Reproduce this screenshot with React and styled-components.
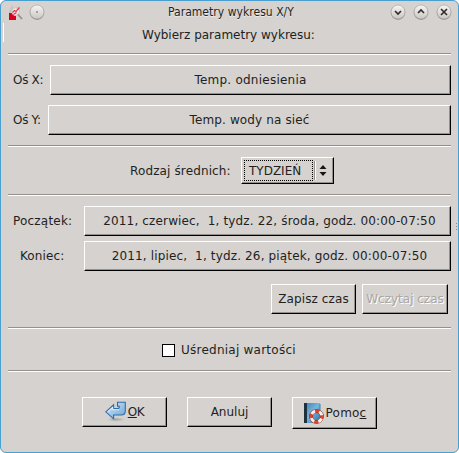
import React from "react";
import styled, { createGlobalStyle, css } from "styled-components";

const GlobalStyle = createGlobalStyle`
  * { box-sizing: border-box; }
  body { margin: 0; background: #fff; overflow: hidden; }
`;

const Window = styled.main`
  position: relative;
  width: 459px;
  height: 453px;
  border: 1px solid #489fd0;
  border-radius: 6px;
  background: #d6d2cf;
  color: #221f1e;
  font: 12px/16px "DejaVu Sans", sans-serif;
  display: flex;
  flex-direction: column;
  white-space: pre;
`;

const TitleBar = styled.header`
  height: 22px;
  display: grid;
  grid-template-columns: 50px 1fr 68px;
  align-items: center;
  padding: 0 0 0 5px;
`;

const TitleIcons = styled.div`
  display: flex;
  align-items: center;
  gap: 6px;
`;

const TitleButtons = styled.div`
  display: flex;
  gap: 7px;
`;

const Title = styled.h1`
  margin: 0;
  padding-left: 112px;
  font: 12px/18px "DejaVu Sans Condensed", "DejaVu Sans", sans-serif;
  font-stretch: condensed;
  letter-spacing: 0.04px;
  text-shadow: 0 1px 0 #eeecea;
`;

const Label = styled.span`
  letter-spacing: ${(p) => p.$spacing || 0}px;
  ${(p) => p.$disabled && css`
    color: #aaa6a2;
    text-shadow: 1px 1px 0 #fff;
  `}
`;

const Heading = styled.div`
  height: 30px;
  padding: 4px 0 0 141px;
`;

const Separator = styled.hr`
  flex: none;
  width: 443px;
  height: 2px;
  margin: 0 0 0 7px;
  border: 0;
  border-top: 1px solid #94908c;
  border-bottom: 1px solid #fff;
`;

const Section = styled.section`
  height: ${(p) => p.$height}px;
  padding-top: ${(p) => p.$top}px;
  display: flex;
  flex-direction: column;
  gap: ${(p) => p.$gap || 0}px;
`;

const Row = styled.div`
  display: flex;
  align-items: ${(p) => p.$align || "center"};
  padding: ${(p) => p.$top || 0}px 7px 0 ${(p) => p.$left}px;
`;

const FieldLabel = styled.label`
  flex: none;
  width: ${(p) => p.$width}px;
  padding-left: ${(p) => p.$indent || 0}px;
  letter-spacing: ${(p) => p.$spacing || 0}px;
`;

const Button = styled.button`
  flex: none;
  width: ${(p) => p.$width}px;
  height: ${(p) => p.$height || 30}px;
  margin: 0 ${(p) => p.$after || 0}px 0 0;
  padding: 0 0 1px;
  display: flex;
  align-items: center;
  justify-content: center;
  gap: 2px;
  border: 1px solid;
  border-color: #fff #000 #000 #fff;
  border-radius: 0;
  box-shadow: inset -1px -1px #94908c;
  background: #d6d2cf;
  color: inherit;
  font: inherit;
  white-space: pre;
`;

const Combo = styled(Button)`
  justify-content: flex-start;
  padding: 0 0 0 2px;
  gap: 1px;
  text-align: left;
`;

const ComboValue = styled.span`
  width: 69px;
  height: 21px;
  padding: 2px 0 0 4px;
  border: 1px dotted #000;
`;

const ComboDivider = styled.i`
  width: 2px;
  height: 19px;
  margin-right: 2px;
  border-left: 1px solid #94908c;
  border-right: 1px solid #fff;
`;

const CheckRow = styled.label`
  display: flex;
  align-items: center;
  padding-left: 161px;
  gap: 6px;
`;

const CheckBox = styled.input`
  appearance: none;
  width: 13px;
  height: 13px;
  margin: 0;
  border: 1px solid #000;
  background: #fff;
`;

const Highlight = styled.i`
  position: absolute;
  left: 2px;
  top: 22px;
  width: 1px;
  height: 19px;
  background: #fff;
`;

const Grip = styled.svg`
  position: absolute;
  right: 0;
  top: 222px;
`;

function RoundIcon({ kind }) {
  const paths = {
    down: "M5 7l3 3 3-3",
    up: "M5 9l3-3 3 3",
    close: "M5 5l6 6M11 5l-6 6",
  };
  return (
    <svg width="16" height="17" viewBox="0 0 16 17">
      <defs>
        <linearGradient id={`disc-${kind}`} x2="0" y2="1">
          <stop stopColor="#f8f7f6" />
          <stop offset="1" stopColor="#c9c5c2" />
        </linearGradient>
      </defs>
      <circle cx="8" cy="8.6" r="7.2" fill="#8e8a88" />
      <circle cx="8" cy="8" r="7" fill={`url(#disc-${kind})`} stroke="#a19d9a" strokeWidth=".6" />
      {kind === "dot" ? (
        <circle cx="8" cy="8" r=".8" fill="#555" />
      ) : (
        <path d={paths[kind]} fill="none" stroke="#302d2b" strokeWidth="1.7" />
      )}
    </svg>
  );
}

function AppIcon() {
  return (
    <svg width="17" height="17" viewBox="0 0 17 17">
      <path d="M3 7l3-6 2 4 5-3-2 9-8 1z" fill="#c7c4c3" />
      <path d="M3 9h4l1 3h2v4H3z" fill="#d9001f" />
      <circle cx="9.5" cy="7.5" r="3.8" fill="#eeeaea" stroke="#c5c1c0" strokeWidth=".8" />
      <path d="M6.5 8.5l2-2 1.5 1 3.5-4M7.5 10.5l3-2" stroke="#e43a50" strokeWidth="1.3" fill="none" />
      <path d="M12 10.5l4 4.5" stroke="#96918f" strokeWidth="1.8" />
    </svg>
  );
}

function ReturnIcon() {
  return (
    <svg width="21" height="21" viewBox="0 0 21 21">
      <defs>
        <linearGradient id="arrow" x2="1" y2="1">
          <stop stopColor="#dcecf8" />
          <stop offset=".5" stopColor="#9fc7e8" />
          <stop offset="1" stopColor="#69a3d2" />
        </linearGradient>
        <radialGradient id="arrowShade">
          <stop stopColor="#77736f" stopOpacity=".5" />
          <stop offset="1" stopColor="#77736f" stopOpacity="0" />
        </radialGradient>
      </defs>
      <ellipse cx="11" cy="18.5" rx="9" ry="2.3" fill="url(#arrowShade)" />
      <path d="M.8 10.8L8.6 3.8V7.6h4q1.6 0 1.6-1V5.2h-1.7V1.2h7.8V10q0 4-4 4H8.6v3.8z" fill="url(#arrow)" stroke="#326ba5" strokeWidth="1.1" />
      <path d="M2.6 10.8L7.8 6.3v2.4H14" fill="none" stroke="#f4faff" strokeWidth=".8" />
    </svg>
  );
}

function HelpIcon() {
  return (
    <svg width="21" height="22" viewBox="0 0 21 22">
      <defs>
        <linearGradient id="book" x2="1" y2="1">
          <stop stopColor="#397fae" />
          <stop offset=".5" stopColor="#75b5de" />
          <stop offset="1" stopColor="#28719f" />
        </linearGradient>
      </defs>
      <path d="M1 1h16v20H1z" fill="url(#book)" />
      <path d="M1 1h3v20H1z" fill="#20313e" />
      <path d="M17 2v18" stroke="#3a81b0" />
      <circle cx="13.5" cy="14.5" r="5.4" fill="none" stroke="#842119" strokeWidth="3.8" />
      <circle cx="13.5" cy="14.5" r="5.4" fill="none" stroke="#da4635" strokeWidth="3" />
      <circle cx="13.5" cy="14.5" r="5.4" fill="none" stroke="#f5eeea" strokeWidth="3" strokeDasharray="4.2 4.282" strokeDashoffset="-2.14" />
    </svg>
  );
}

export default function App() {
  return (
    <>
      <GlobalStyle />
      <Window>
        <TitleBar>
          <TitleIcons><AppIcon /><RoundIcon kind="dot" /></TitleIcons>
          <Title>Parametry wykresu X/Y</Title>
          <TitleButtons>
            <RoundIcon kind="down" /><RoundIcon kind="up" /><RoundIcon kind="close" />
          </TitleButtons>
        </TitleBar>
        <Heading><Label>Wybierz parametry wykresu:</Label></Heading>
        <Separator />
        <Section $height={90} $top={10} $gap={10}>
          <Row $left={12}>
            <FieldLabel $width={37} $spacing={-0.3}>Oś X:</FieldLabel>
            <Button $width={401}><Label $spacing={0.24}>Temp. odniesienia</Label></Button>
          </Row>
          <Row $left={12}>
            <FieldLabel $width={35} $spacing={-0.3}>Oś Y:</FieldLabel>
            <Button $width={403}><Label $spacing={0.13}>Temp. wody na sieć</Label></Button>
          </Row>
        </Section>
        <Separator />
        <Section $height={47} $top={10}>
          <Row $left={129}>
            <FieldLabel $width={111} $spacing={0.13}>Rodzaj średnich:</FieldLabel>
            <Combo $width={93} $height={27}>
              <ComboValue>TYDZIEŃ</ComboValue>
              <ComboDivider />
              <svg width="8" height="13" viewBox="0 0 8 13">
                <path d="M.5 5L4 1l3.5 4zM.5 8h7L4 12z" fill="#171514" />
              </svg>
            </Combo>
          </Row>
        </Section>
        <Separator />
        <Section $height={131} $top={10} $gap={5}>
          <Row $left={12}>
            <FieldLabel $width={71} $spacing={0.2}>Początek:</FieldLabel>
            <Button $width={367}><Label $spacing={0.15}>{" 2011, czerwiec,  1, tydz. 22, środa, godz. 00:00-07:50"}</Label></Button>
          </Row>
          <Row $left={12}>
            <FieldLabel $width={71} $indent={7} $spacing={0.1}>Koniec:</FieldLabel>
            <Button $width={367}><Label $spacing={0.15}>{" 2011, lipiec,  1, tydz. 26, piątek, godz. 00:00-07:50"}</Label></Button>
          </Row>
          <Row $left={270} $top={8}>
            <Button $width={85} $after={6}><Label $spacing={0.1}>Zapisz czas</Label></Button>
            <Button $width={86} disabled><Label $disabled>Wczytaj czas</Label></Button>
          </Row>
        </Section>
        <Separator />
        <Section $height={41} $top={13}>
          <CheckRow><CheckBox type="checkbox" /><Label $spacing={0.24}>Uśredniaj wartości</Label></CheckRow>
        </Section>
        <Separator />
        <Section $height={80} $top={25}>
          <Row $left={81} $align="flex-start">
            <Button $width={85} $after={20}><ReturnIcon /><Label $spacing={-0.4}><u>O</u>K</Label></Button>
            <Button $width={85} $after={20}><Label>Anuluj</Label></Button>
            <Button $width={85} $height={32}><HelpIcon /><Label $spacing={0.2}>Pomo<u>c</u></Label></Button>
          </Row>
        </Section>
        <Highlight />
        <Grip width="3" height="8" viewBox="0 0 3 8">
          <path d="M1 0h1v1H1zM1 3h1v1H1zM1 6h1v1H1z" fill="#8c8885" />
        </Grip>
      </Window>
    </>
  );
}
